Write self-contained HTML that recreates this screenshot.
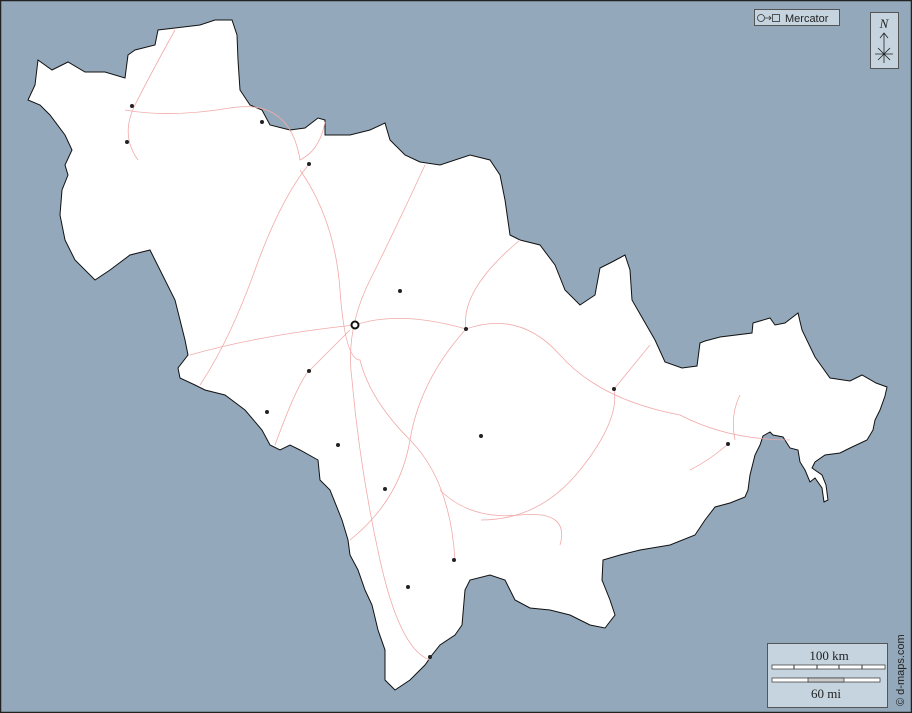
<!DOCTYPE html><html><head><style>body{margin:0;width:912px;height:713px;overflow:hidden;background:#93a9bb}svg{display:block}</style></head><body>
<svg width="912" height="713" viewBox="0 0 912 713" xmlns="http://www.w3.org/2000/svg">
<rect x="0.5" y="0.5" width="911" height="712" fill="#93a9bb" stroke="#222" stroke-width="1.5"/>
<path d="M38,60 L52,70 68,62 85,72 105,72 125,78 128,55 135,50 155,45 158,30 175,28 200,25 215,20 232,20 237,35 238,60 240,90 250,105 262,110 270,125 290,130 305,128 318,118 325,120 325,135 350,135 370,130 385,123 390,140 405,155 420,162 440,165 470,155 490,160 500,175 505,200 510,235 520,240 540,245 555,265 565,290 580,305 595,295 600,268 612,262 625,255 630,270 632,300 655,340 665,362 682,368 697,366 700,343 705,341 720,337 752,333 753,323 770,318 775,325 785,323 798,313 802,330 815,357 830,378 850,381 862,375 876,383 887,387 885,396 880,410 875,420 873,430 867,440 850,448 840,453 825,455 815,462 812,468 822,475 826,485 828,500 824,502 822,488 815,478 810,482 805,470 800,462 798,450 790,448 783,437 773,435 770,432 763,436 760,445 755,455 750,475 748,490 745,497 730,503 715,507 705,520 695,535 670,545 640,550 620,555 603,560 602,580 610,600 615,615 605,628 590,625 570,615 550,610 530,608 515,600 505,580 490,575 470,580 465,590 462,625 455,635 440,645 432,655 425,665 410,680 395,690 385,680 385,665 385,650 378,630 372,605 365,590 358,570 350,555 348,540 342,520 330,490 320,480 318,460 300,450 290,445 280,450 270,445 262,430 245,410 225,395 205,390 195,385 180,378 178,368 188,355 185,340 180,320 175,300 160,270 150,250 130,255 110,270 95,280 75,260 65,240 60,215 62,190 68,175 65,165 72,150 65,135 50,115 40,105 28,100 35,85 Z" fill="#fff" stroke="#111" stroke-width="1"/>
<g fill="none" stroke="#f2a9a9" stroke-width="0.8">
<path d="M175,30 Q150,75 135,105 T138,160"/><path d="M125,110 Q170,118 230,108 T300,160 Q320,150 325,122"/>
<path d="M309,164 Q280,200 255,270 T200,385"/><path d="M300,170 Q335,220 340,290 T360,360 Q370,400 410,440 T455,560"/>
<path d="M425,165 Q395,230 370,280 T352,380 Q360,470 380,560 T430,660"/>
<path d="M190,355 Q260,335 355,325 Q400,310 466,329 Q520,310 560,355 T680,415 Q728,440 790,440"/>
<path d="M466,329 Q460,290 520,240"/><path d="M466,329 Q420,380 410,440 T350,540"/>
<path d="M350,330 Q320,360 309,371 T275,445"/><path d="M614,389 L650,345"/><path d="M481,520 Q540,520 580,470 T614,389"/>
<path d="M440,490 Q470,520 520,515 T560,545"/><path d="M728,444 Q710,460 690,470"/><path d="M740,395 Q730,415 735,440"/>
</g>
<g fill="#222"><circle cx="132" cy="106" r="2"/><circle cx="127" cy="142" r="2"/><circle cx="262" cy="122" r="2"/><circle cx="309" cy="164" r="2"/><circle cx="400" cy="291" r="2"/><circle cx="466" cy="329" r="2"/><circle cx="309" cy="371" r="2"/><circle cx="267" cy="412" r="2"/><circle cx="338" cy="445" r="2"/><circle cx="481" cy="436" r="2"/><circle cx="614" cy="389" r="2"/><circle cx="728" cy="444" r="2"/><circle cx="385" cy="489" r="2"/><circle cx="454" cy="560" r="2"/><circle cx="408" cy="587" r="2"/><circle cx="430" cy="657" r="2"/></g>
<circle cx="355" cy="325" r="3.5" fill="#fff" stroke="#111" stroke-width="2"/>
<rect x="754.5" y="9.5" width="85" height="16" fill="#c5d4de" stroke="#555"/>
<circle cx="761" cy="18" r="3.5" fill="none" stroke="#333" stroke-width="0.8"/>
<path d="M765,18h6M769,16l2,2-2,2" stroke="#333" stroke-width="0.8" fill="none"/>
<rect x="772.5" y="14.5" width="7" height="7" fill="none" stroke="#333" stroke-width="0.8"/>
<text x="785" y="22" font-family="Liberation Sans,sans-serif" font-size="11" fill="#222">Mercator</text>
<rect x="870.5" y="12.5" width="28" height="56" fill="#c5d4de" stroke="#555"/>
<text x="884" y="28" text-anchor="middle" font-family="Liberation Serif,serif" font-style="italic" font-size="13" fill="#222">N</text>
<path d="M884,33 L884,63 M880,38 L884,33 888,38 M875,54 L893,54 M878,48 L890,60 M890,48 L878,60" stroke="#222" stroke-width="0.8" fill="none"/>
<rect x="767.5" y="643.5" width="120" height="64" fill="#c5d4de" stroke="#555"/>
<text x="829" y="660" text-anchor="middle" font-family="Liberation Serif,serif" font-size="13" fill="#222">100 km</text>
<rect x="772" y="665" width="113" height="4" fill="#fff" stroke="#333" stroke-width="0.7"/>
<path d="M794,665v4M817,665v4M839,665v4M862,665v4" stroke="#333"/>
<rect x="772" y="678" width="108" height="4" fill="#fff" stroke="#333" stroke-width="0.7"/>
<rect x="808" y="678" width="36" height="4" fill="#ccc" stroke="#333" stroke-width="0.7"/>
<text x="826" y="698" text-anchor="middle" font-family="Liberation Serif,serif" font-size="13" fill="#222">60 mi</text>
<text transform="translate(904,706) rotate(-90)" font-family="Liberation Sans,sans-serif" font-size="11" fill="#222">© d-maps.com</text>
</svg></body></html>
